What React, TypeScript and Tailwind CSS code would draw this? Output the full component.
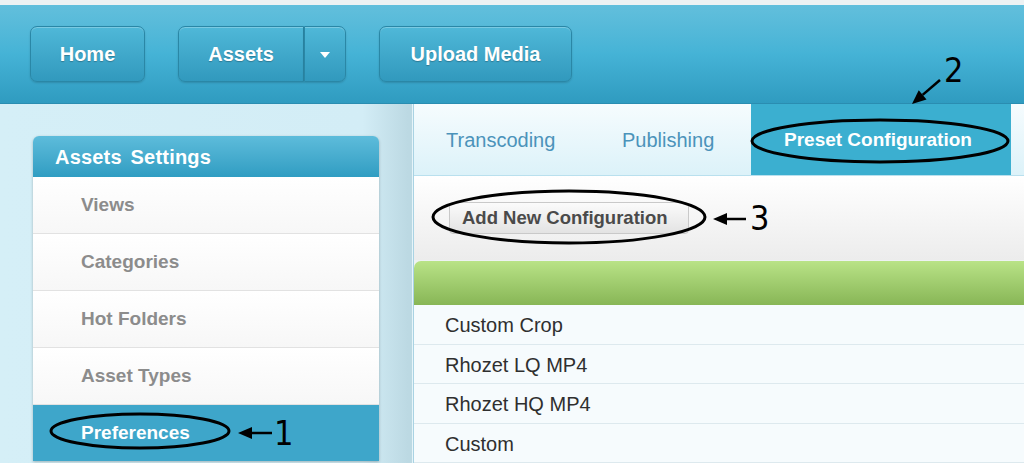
import React from 'react';

const sideItems = ['Views', 'Categories', 'Hot Folders', 'Asset Types'];
const rows = ['Custom Crop', 'Rhozet LQ MP4', 'Rhozet HQ MP4', 'Custom'];

const btn =
  'h-[56px] flex items-center justify-center rounded-[7px] border border-[#2a87a6] bg-gradient-to-b from-[#4fb8d8] to-[#3199bd] shadow-[inset_0_1px_0_rgba(255,255,255,0.25),0_1px_2px_rgba(0,0,0,0.15)] text-white font-bold text-[20px] [text-shadow:0_1px_1px_rgba(0,0,0,0.25)]';

const Arrow: React.FC<{ x1: number; y1: number; x2: number; y2: number }> = ({ x1, y1, x2, y2 }) => {
  // arrowhead sits at (x2, y2)
  const a = Math.atan2(y2 - y1, x2 - x1);
  const len = 14;
  const w = 6;
  const bx = x2 - len * Math.cos(a);
  const by = y2 - len * Math.sin(a);
  const px = -Math.sin(a) * w;
  const py = Math.cos(a) * w;
  return (
    <g>
      <line x1={x1} y1={y1} x2={bx} y2={by} stroke="#000" strokeWidth={2.5} />
      <polygon points={`${x2},${y2} ${bx + px},${by + py} ${bx - px},${by - py}`} fill="#000" />
    </g>
  );
};

export default function App() {
  return (
    <div className="relative w-[1024px] h-[463px] overflow-hidden bg-[#eef2f3] font-['Liberation_Sans',Arial,sans-serif]">
      {/* Top bar */}
      <div className="mt-[5px] h-[99px] flex items-center gap-[33px] px-[30px] bg-gradient-to-b from-[#62bfdc] via-[#45b3d6] to-[#2f9bc0] border-b border-[#2a8db1]">
        <div className={`${btn} w-[115px]`}>Home</div>
        <div className="flex">
          <div className={`${btn} w-[126px] rounded-r-none`}>Assets</div>
          <div className={`${btn} w-[42px] rounded-l-none border-l-[#2a87a6]`}>
            <span className="w-0 h-0 mt-[2px] border-x-[5px] border-x-transparent border-t-[6px] border-t-white" />
          </div>
        </div>
        <div className={`${btn} w-[193px]`}>Upload Media</div>
      </div>

      <div className="flex h-[359px]">
        {/* Sidebar */}
        <div className="w-[413px] shrink-0 bg-[linear-gradient(to_right,#d5eff7_0%,#d3edf6_88%,#bcd9e3_99%)] border-r border-[#e6f4f9] pt-[32px] pl-[33px]">
          <div className="w-[346px] shadow-[0_1px_3px_rgba(0,0,0,0.25)] rounded-t-[6px]">
            <div className="h-[41px] flex items-center pl-[22px] rounded-t-[6px] bg-gradient-to-b from-[#5dbcdb] to-[#2f9dc2] text-white font-bold text-[20px] tracking-[0.2px] [word-spacing:3px]">
              Assets Settings
            </div>
            {sideItems.map(item => (
              <div
                key={item}
                className="h-[57px] flex items-center pl-[48px] bg-gradient-to-b from-white to-[#f7f7f7] border-b border-[#e2e2e2] text-[#8c8c8c] font-bold text-[19px]"
              >
                {item}
              </div>
            ))}
            <div className="h-[56px] flex items-center pl-[48px] bg-[#3ea6ca] text-white font-bold text-[19px]">
              Preferences
            </div>
          </div>
        </div>

        {/* Main content */}
        <div className="flex-1 flex flex-col border-l border-[#a9d3e3]">
          <div className="h-[72px] flex bg-gradient-to-b from-[#f6fcfe] to-[#dcf2f9] border-b border-[#b9e0ee]">
            <div className="w-[177px] pl-[32px] pt-[2px] flex items-center text-[20px] text-[#4b93ba]">Transcoding</div>
            <div className="w-[160px] pl-[31px] pt-[2px] flex items-center text-[20px] text-[#4b93ba]">Publishing</div>
            <div className="w-[260px] pl-[33px] pt-[2px] flex items-center bg-[#3bafd0] text-white font-bold text-[19px]">
              Preset Configuration
            </div>
          </div>

          <div className="h-[85px] flex items-center pl-[35px] bg-gradient-to-b from-white to-[#ececec]">
            <div className="h-[32px] pl-[12px] pr-[20px] flex items-center rounded-[4px] border border-[#c9c9c9] bg-gradient-to-b from-[#fbfbfb] to-[#e3e3e3] text-[#4a4a4a] font-bold text-[18.5px]">
              Add New Configuration
            </div>
          </div>

          <div className="h-[44px] mt-[1px] rounded-tl-[7px] bg-gradient-to-b from-[#b9e387] to-[#88b656]" />

          {rows.map(r => (
            <div
              key={r}
              className="h-[39.5px] shrink-0 flex items-center pl-[31px] pt-[2px] bg-[#f6fbfd] border-b border-[#dde9ee] text-[#2f2f2f] text-[20px]"
            >
              {r}
            </div>
          ))}
        </div>
      </div>

      {/* Annotations */}
      <svg className="absolute inset-0 pointer-events-none" width="1024" height="463">
        <ellipse cx="140" cy="431" rx="89" ry="17" fill="none" stroke="#000" strokeWidth="3" />
        <Arrow x1={272} y1={433} x2={238} y2={433} />
        <ellipse cx="880" cy="141" rx="128" ry="21" fill="none" stroke="#000" strokeWidth="3" />
        <Arrow x1={940} y1={80} x2={912} y2={104} />
        <ellipse cx="569" cy="217" rx="136" ry="26" fill="none" stroke="#000" strokeWidth="3" />
        <Arrow x1={746} y1={219} x2={713} y2={219} />
      </svg>
      <span className="absolute left-[274px] top-[416px] text-[34px] leading-none text-black font-['DejaVu_Sans_Condensed','Liberation_Sans',sans-serif] font-light">1</span>
      <span className="absolute left-[944px] top-[53px] text-[34px] leading-none text-black font-['DejaVu_Sans_Condensed','Liberation_Sans',sans-serif] font-light">2</span>
      <span className="absolute left-[750px] top-[201px] text-[34px] leading-none text-black font-['DejaVu_Sans_Condensed','Liberation_Sans',sans-serif] font-light">3</span>
    </div>
  );
}
